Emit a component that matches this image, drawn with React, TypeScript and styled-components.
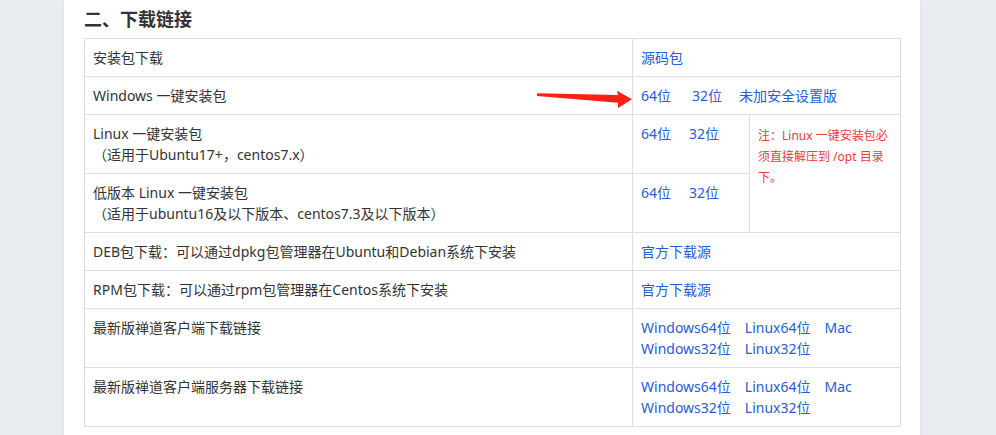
import React from "react";
import styled, { createGlobalStyle } from "styled-components";

const GlobalStyle = createGlobalStyle`
  html, body {
    margin: 0;
    padding: 0;
    background: #e9ecf0;
  }
  body {
    font-family: "Noto Sans", "Noto Sans CJK SC", sans-serif;
    color: #333;
  }
`;

const Page = styled.div`
  display: flex;
  padding-left: 64px;
  min-height: 435px;
`;

const Panel = styled.main`
  width: 856px;
  background: #fff;
  box-shadow: 0 0 3px rgba(0, 0, 0, 0.08);
  padding: 6px 20px 20px;
  box-sizing: border-box;
`;

const Heading = styled.h2`
  margin: 0 0 6px;
  font-size: 18px;
  line-height: 26px;
  font-weight: 700;
  color: #333;
`;

const TableWrap = styled.div`
  position: relative;
`;

const Table = styled.table`
  width: 816px;
  border-collapse: collapse;
  table-layout: fixed;
  font-size: 14px;
  line-height: 21px;
`;

const Cell = styled.td<{ $note?: boolean }>`
  border: 1px solid #dddddd;
  padding: ${(p) => (p.$note ? "10px 8px 8px" : "8px")};
  vertical-align: top;
  color: ${(p) => (p.$note ? "#ea3a3a" : "#333")};
  font-size: ${(p) => (p.$note ? "12px" : "14px")};
`;

const Links = styled.div<{ $gap?: number }>`
  display: flex;
  flex-wrap: wrap;
  column-gap: ${(p) => p.$gap ?? 13}px;
`;

const Link = styled.a<{ $ml?: number }>`
  color: #2a5bd7;
  text-decoration: none;
  cursor: pointer;
  margin-left: ${(p) => p.$ml ?? 0}px;
`;

const Arrow = styled.svg`
  position: absolute;
  left: 452px;
  top: 51px;
  pointer-events: none;
`;

const clientLinks = (
  <Links $gap={14}>
    <Link>Windows64位</Link>
    <Link>Linux64位</Link>
    <Link>Mac</Link>
    <Link>Windows32位</Link>
    <Link>Linux32位</Link>
  </Links>
);

export default function App() {
  return (
    <>
      <GlobalStyle />
      <Page>
        <Panel>
          <Heading>二、下载链接</Heading>
          <TableWrap>
            <Table>
              <colgroup>
                <col style={{ width: 548 }} />
                <col style={{ width: 117 }} />
                <col style={{ width: 151 }} />
              </colgroup>
              <tbody>
                <tr>
                  <Cell>安装包下载</Cell>
                  <Cell colSpan={2}>
                    <Link>源码包</Link>
                  </Cell>
                </tr>
                <tr>
                  <Cell>Windows 一键安装包</Cell>
                  <Cell colSpan={2}>
                    <Links $gap={0}>
                      <Link>64位</Link>
                      <Link $ml={21}>32位</Link>
                      <Link $ml={17}>未加安全设置版</Link>
                    </Links>
                  </Cell>
                </tr>
                <tr>
                  <Cell>
                    Linux 一键安装包
                    <br />
                    （适用于Ubuntu17+，centos7.x）
                  </Cell>
                  <Cell>
                    <Links $gap={18}>
                      <Link>64位</Link>
                      <Link>32位</Link>
                    </Links>
                  </Cell>
                  <Cell rowSpan={2} $note>
                    注：Linux 一键安装包必须直接解压到 /opt 目录下。
                  </Cell>
                </tr>
                <tr>
                  <Cell>
                    低版本 Linux 一键安装包
                    <br />
                    （适用于ubuntu16及以下版本、centos7.3及以下版本）
                  </Cell>
                  <Cell>
                    <Links $gap={18}>
                      <Link>64位</Link>
                      <Link>32位</Link>
                    </Links>
                  </Cell>
                </tr>
                <tr>
                  <Cell>DEB包下载：可以通过dpkg包管理器在Ubuntu和Debian系统下安装</Cell>
                  <Cell colSpan={2}>
                    <Link>官方下载源</Link>
                  </Cell>
                </tr>
                <tr>
                  <Cell>RPM包下载：可以通过rpm包管理器在Centos系统下安装</Cell>
                  <Cell colSpan={2}>
                    <Link>官方下载源</Link>
                  </Cell>
                </tr>
                <tr>
                  <Cell>最新版禅道客户端下载链接</Cell>
                  <Cell colSpan={2}>{clientLinks}</Cell>
                </tr>
                <tr>
                  <Cell>最新版禅道客户端服务器下载链接</Cell>
                  <Cell colSpan={2}>{clientLinks}</Cell>
                </tr>
              </tbody>
            </Table>
            <Arrow width="98" height="22" viewBox="0 0 98 22">
              <polygon
                points="1,4.3 82,6 81,1.7 96,10.3 82,19 82,13.7 1,7"
                fill="#fb1f14"
              />
            </Arrow>
          </TableWrap>
        </Panel>
      </Page>
    </>
  );
}
